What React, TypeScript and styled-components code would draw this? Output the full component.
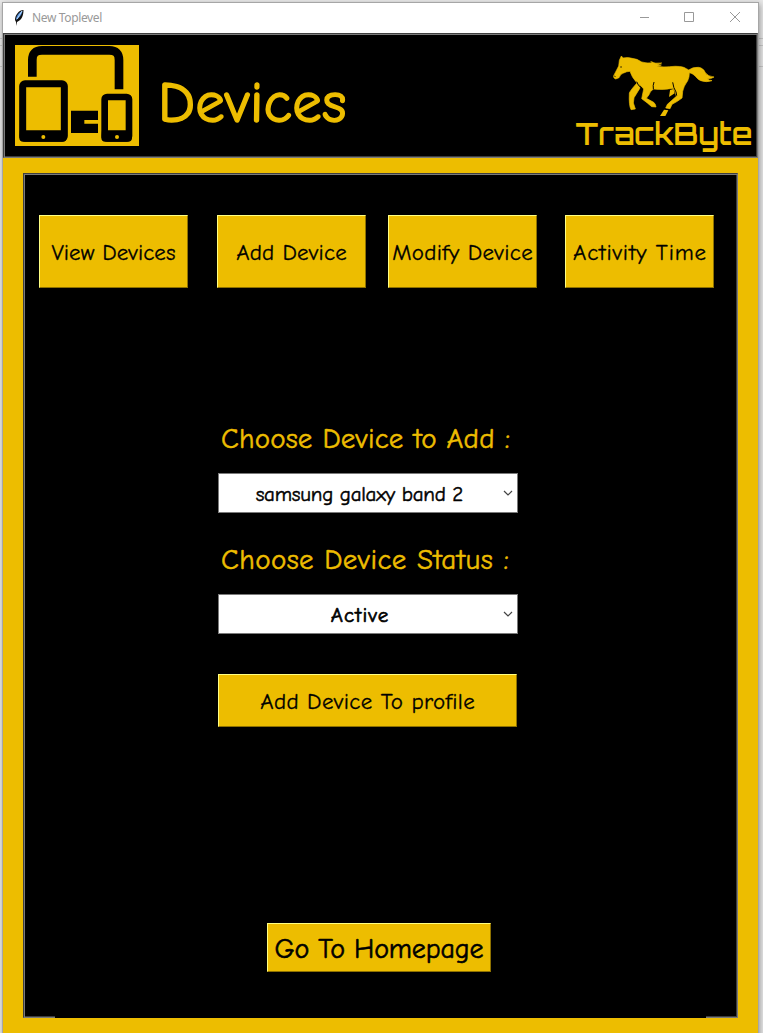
import React from 'react';
import styled, { createGlobalStyle } from 'styled-components';

const gold = '#edbd00';

const GlobalStyle = createGlobalStyle`
  *, *::before, *::after { box-sizing: border-box; }
  body { margin: 0; background: #e6e6e6; }
`;

const Desktop = styled.div`
  width: 763px;
  height: 1033px;
  overflow: hidden;
  padding: 2px 0 0 2px;
  background:
    linear-gradient(#c8c8c8, #c8c8c8) 0 38px / 100% 1px no-repeat,
    linear-gradient(#c8c8c8, #c8c8c8) 0 45px / 100% 1px no-repeat,
    linear-gradient(#c8c8c8, #c8c8c8) 0 66px / 100% 1px no-repeat,
    #e8e8e8;
`;

const Window = styled.main`
  width: 757px;
  height: 1040px;
  border: 1px solid #a6a6a6;
  background: ${gold};
  box-shadow: 1px 2px 6px rgba(0, 0, 0, 0.35);
`;

const TitleBar = styled.header`
  height: 30px;
  display: flex;
  align-items: center;
  background: #fff;
  padding-left: 10px;
  font: 12px/30px 'Noto Sans', sans-serif;
  color: #999;
`;

const WindowTitle = styled.span`
  margin-left: 7px;
  letter-spacing: -0.36px;
  flex: 1;
`;

const WindowControls = styled.svg`
  width: 118px;
  height: 30px;
`;

const Groove = styled.section`
  border: 1px solid;
  border-color: #3f3f3f #7b7b7b #7b7b7b #3f3f3f;
  position: relative;
  background: #000;
  box-shadow: inset 1px 1px 0 #7b7b7b, inset -1px -1px 0 #3f3f3f;
`;

const Banner = styled(Groove)`
  height: 125px;
  display: flex;
  padding: 11px 4px 0 11px;
`;

const Label = styled.span<{ $size: number; $spacing?: number; $weight?: number }>`
  display: block;
  white-space: pre;
  font-family: 'Comic Sans MS', 'Comic Neue', 'Open Sans', sans-serif;
  font-weight: 400;
  font-size: ${p => p.$size}px;
  line-height: 1.3;
  letter-spacing: ${p => p.$spacing ?? 0}px;
  margin-right: ${p => -(p.$spacing ?? 0)}px;
  font-variant-ligatures: none;
  -webkit-text-stroke: ${p => p.$weight ?? 0.3}px currentColor;
`;

const PageTitle = styled.h1`
  margin: 20px 0 0 19px;
  font-weight: 400;
  color: ${gold};
  flex: 1;
`;

const Panel = styled(Groove)`
  margin: 15px 0 0 20px;
  width: 715px;
  height: 845px;
  display: flex;
  flex-direction: column;
  padding: 41px 15px 0;
  &::after {
    content: '';
    position: absolute;
    left: 31px;
    right: 31px;
    bottom: -1px;
    height: 2px;
    background: #000;
  }
`;

const Tabs = styled.nav`
  display: grid;
  grid-template-columns: 149px 149px 149px 149px;
  column-gap: 29px;
  > :nth-child(3) { margin-left: -7px; margin-right: 7px; }
  > :nth-child(4) { margin-left: -8px; margin-right: 8px; }
`;

const Button = styled.button<{ $w?: number; $h: number }>`
  width: ${p => (p.$w ? `${p.$w}px` : 'auto')};
  height: ${p => p.$h}px;
  padding: 3px 0 0;
  display: flex;
  align-items: center;
  justify-content: center;
  background: ${gold};
  color: #000;
  border: 1px solid;
  border-color: #ffff83 #8e7100 #8e7100 #ffff83;
`;

const Form = styled.form`
  margin: 131px 0 0 179px;
  width: 300px;
  display: flex;
  flex-direction: column;
`;

const Field = styled.label`
  display: flex;
  flex-direction: column;
  height: 121px;
  color: ${gold};
`;

const FieldName = styled.div`
  height: 54px;
  padding: 1px 0 0 3px;
`;

const Combo = styled.div`
  height: 40px;
  border: 1px solid #7a7a7a;
  background: #fff;
  color: #000;
  display: flex;
  align-items: center;
`;

const ComboValue = styled.div`
  flex: 1;
  display: flex;
  justify-content: center;
  padding-top: 3px;
`;

const Chevron = styled.svg`
  width: 17px;
  height: 12px;
`;

const Actions = styled.div`
  margin-top: 13px;
`;

const Footer = styled.footer`
  margin: 196px 0 0 228px;
`;

const DeviceIcon = () => (
  <svg width="124" height="101" viewBox="45 135 372 303">
    <path fill={gold} d="M45 135h372v303H45z" />
    <path fill="none" stroke="#000" strokeWidth="26" d="M97 230v-50q0-29 29-29h202q29 0 29 29v88" />
    <rect x="68" y="251" width="125" height="164" rx="7" fill="none" stroke="#000" strokeWidth="21" />
    <path d="M60 391h140v22q0 12-12 12H70q-12 0-12-12z" />
    <rect x="314" y="291" width="73" height="124" rx="7" fill="none" stroke="#000" strokeWidth="20" />
    <path d="M306 391h90v22q0 12-12 12h-68q-12 0-12-12zM213 332h81v28h-41v11h41v28h-81z" />
    <circle cx="130" cy="411" r="6" fill={gold} />
    <circle cx="351" cy="411" r="6" fill={gold} />
  </svg>
);

const Brand = () => (
  <svg width="182" height="109" viewBox="570 46 182 109">
    <g transform="translate(558.7 41) scale(.33333)" fill={gold}>
      <path stroke={gold} strokeWidth="2" strokeLinejoin="round" d="M185 48L190 54Q205 51 217 55Q232 56 246 66Q262 71 280 68L273 65Q287 72 306 69L293 75L305 75L291 79Q310 82 330 80Q365 76 380 86L387 90Q400 80 416 82Q430 83 437 98Q445 110 463 111Q453 118 443 116Q448 122 457 122Q440 128 423 122C410 117 406 101 389 98Q389 112 384 122Q371 140 369 154L367 174Q353 185 337 193L331 206L318 204L323 193L350 169Q348 156 340 145Q310 151 281 147Q271 154 268 164L260 175L282 187Q288 192 289 201L276 200Q265 190 246 176L252 147L238 133L241 144L223 173L221 189L227 207L214 209Q207 196 209 159Q212 151 232 129Q216 112 211 94Q201 94 192 99Q182 101 178 113L168 117Q160 114 162 107L177 78L179 61Z" />
      <path d="M331 150L341 147L345 160L328 171zM313 209L326 211L317 228H301z" />
      <path d="M231 125Q234 138 248 145M283 126Q279 136 281 147M339 127Q341 144 349 156L351 167" fill="none" stroke="#000" strokeWidth="3" />
      <circle cx="184" cy="81" r="2" fill="#000" />
      <path d="M163 108l5 2" stroke="#000" strokeWidth="2" />
    </g>
    <text x="574.5" y="145.5" textLength="177" lengthAdjust="spacingAndGlyphs" fill={gold} fontFamily="Orbitron, Audiowide, Inter, sans-serif" fontWeight="600" fontSize="30">TrackByte</text>
  </svg>
);

const Feather = () => (
  <svg width="12" height="18" viewBox="0 0 12 18">
    <path fill="#111" d="M10.500 1C6 1 2 6 2 11l1 2v4l1-4c5-2 6.500-7 6.500-12z" />
    <path fill="#4d8ad6" d="M9.500 2C6 3 3 7 3 11c3-2 6-5 6.500-9z" />
    <path stroke="#bcdcff" d="M9 2L4 10" />
  </svg>
);

const Arrow = () => (
  <Chevron viewBox="0 0 17 12">
    <path d="M4 4l4 4 4-4" fill="none" stroke="#444" strokeWidth="1.2" />
  </Chevron>
);

export default function App() {
  return (
    <Desktop>
      <GlobalStyle />
      <Window>
        <TitleBar>
          <Feather />
          <WindowTitle>New Toplevel</WindowTitle>
          <WindowControls viewBox="0 0 118 30">
            <path d="M-1 14.5h10M44.5 9.5h9v9h-9zM90 9l10 10M100 9l-10 10" fill="none" stroke="#999" />
          </WindowControls>
        </TitleBar>
        <Banner>
          <DeviceIcon />
          <PageTitle><Label $size={59} $spacing={0.2} $weight={1.5}>Devices</Label></PageTitle>
          <Brand />
        </Banner>
        <Panel>
          <Tabs>
            <Button $h={73}><Label $size={23} $spacing={0.05}>View Devices</Label></Button>
            <Button $h={73}><Label $size={23} $spacing={0.2}>Add Device</Label></Button>
            <Button $h={73}><Label $size={23} $spacing={0.33}>Modify Device</Label></Button>
            <Button $h={73}><Label $size={23} $spacing={0.8}>Activity Time</Label></Button>
          </Tabs>
          <Form>
            <Field>
              <FieldName><Label $size={29} $spacing={0.2} $weight={0.5}>Choose Device to Add :</Label></FieldName>
              <Combo><ComboValue><Label $size={21} $spacing={-0.25} $weight={0.5}>samsung galaxy band 2</Label></ComboValue><Arrow /></Combo>
            </Field>
            <Field>
              <FieldName><Label $size={29} $spacing={0.45} $weight={0.5}>Choose Device Status :</Label></FieldName>
              <Combo><ComboValue><Label $size={21} $spacing={1.1} $weight={0.7}>Active</Label></ComboValue><Arrow /></Combo>
            </Field>
            <Actions>
              <Button type="button" $w={299} $h={53}><Label $size={23} $spacing={0.35}>Add Device To profile</Label></Button>
            </Actions>
          </Form>
          <Footer>
            <Button $w={224} $h={49}><Label $size={28} $spacing={-0.15} $weight={0.6}>Go To Homepage</Label></Button>
          </Footer>
        </Panel>
      </Window>
    </Desktop>
  );
}
